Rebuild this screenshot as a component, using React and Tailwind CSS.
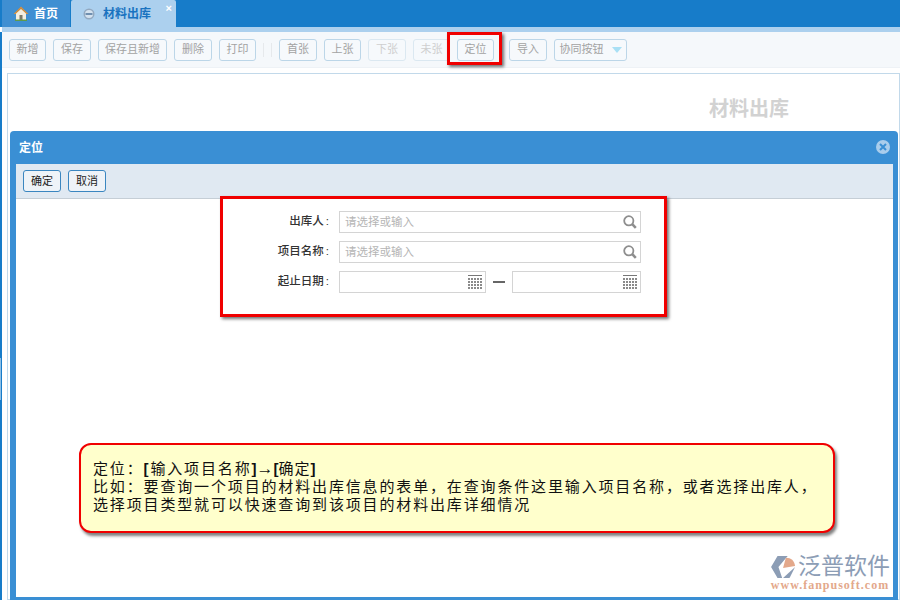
const cjk = { fontFamily: '"Liberation Sans", "Noto Sans CJK SC", sans-serif' }

function ToolButton({ label, width, tone = 'normal', caret }) {
  const tones = {
    normal: 'border-[#bcd6e8] text-[#a3a3a3]',
    faded: 'border-[#dbe8f1] text-[#cfcfcf]',
  }
  return (
    <button
      className={`flex h-[22px] shrink-0 items-center justify-center gap-2 rounded-[3px] border bg-[#f6f9fc] text-[11px] ${tones[tone]}`}
      style={{ width }}
    >
      {label}
      {caret && <span className="h-0 w-0 border-x-[5px] border-t-[6px] border-x-transparent border-t-[#a9e0f5]" />}
    </button>
  )
}

function DialogButton({ label }) {
  return (
    <button className="flex h-[22px] w-[38px] items-center justify-center rounded-[3px] border border-[#3a86c0] bg-[#eef3f8] text-[11px] text-[#222]">
      {label}
    </button>
  )
}

function SearchIcon() {
  return (
    <svg width="14" height="14" viewBox="0 0 14 14" className="shrink-0">
      <circle cx="5.8" cy="5.8" r="4.6" fill="none" stroke="#8e8e8e" strokeWidth="1.8" />
      <path d="M9.2 9.2 L12.8 12.8" stroke="#8e8e8e" strokeWidth="2.6" />
    </svg>
  )
}

function CalendarIcon() {
  const cells = []
  for (let r = 0; r < 4; r++) {
    for (let c = 0; c < 5; c++) {
      cells.push(<rect key={`${r}-${c}`} x={c * 3} y={3 + r * 3} width="2" height="2" fill="#8a8a8a" />)
    }
  }
  return (
    <svg width="14" height="15" viewBox="0 0 14 15" className="shrink-0">
      <rect x="0" y="0" width="14" height="1" fill="#777" />
      {cells}
    </svg>
  )
}

function Field({ width, placeholder, icon }) {
  return (
    <div
      className="flex h-[22px] items-center justify-between border border-[#d4d4d4] bg-white pr-[3px] pl-[5px] text-[11.5px] text-[#b5b5b5]"
      style={{ width }}
    >
      <span className="pt-[1px]">{placeholder}</span>
      {icon}
    </div>
  )
}

function FormRow({ label, children }) {
  return (
    <div className="flex h-[22px] items-center">
      <div className="w-[105px] pr-[1px] text-right text-[11.5px] font-medium text-[#333]">
        {label}
        <span className="ml-[2px]">:</span>
      </div>
      <div className="ml-[9px] flex items-center">{children}</div>
    </div>
  )
}

function Logo() {
  return (
    <div className="absolute right-[2px] bottom-[6px] flex w-[122px] flex-col items-center">
      <div className="flex items-center">
        <svg width="28" height="24" viewBox="0 0 28 26" className="shrink-0">
          <path d="M7 1 H18 L8 13 L12 25 H7 L0 13 Z" fill="#8c9db5" />
          <path d="M16 3 C22 3 25 6 26 12 L13 14 Z" fill="#e3a88b" />
          <path d="M26 13 L20 25 H13 Z" fill="#8c9db5" />
        </svg>
        <span className="text-[23px] leading-[25px] font-normal text-[#8c9db5]">泛普软件</span>
      </div>
      <div
        className="text-[12px] leading-[12px] font-bold tracking-[1px] whitespace-nowrap text-[#e3a88b]"
        style={{ fontFamily: '"Liberation Serif", serif' }}
      >
        www.fanpusoft.com
      </div>
    </div>
  )
}

export default function App() {
  return (
    <div className="relative flex h-[600px] w-[900px] flex-col overflow-hidden bg-white" style={cjk}>
      {/* tabs */}
      <div className="flex h-[27px] shrink-0 items-start bg-[#177cc9] pl-[2px]">
        <div className="flex h-[27px] w-[68px] items-center gap-[5px] bg-[#3f8fd2] pl-[11px] text-[12px] font-bold text-white">
          <svg width="16" height="15" viewBox="0 0 16 15" className="shrink-0">
            <path d="M8 1 L15 8 H13 V14 H3 V8 H1 Z" fill="#f4eee0" />
            <path d="M8 0.5 L15.5 8 L13.5 8 L8 3 L2.5 8 L0.5 8 Z" fill="#c98a3e" />
            <rect x="6.5" y="9" width="3" height="5" fill="#7a7a6a" />
            <rect x="2" y="13.5" width="12" height="1.5" fill="#5f9a4a" />
          </svg>
          首页
        </div>
        <div className="relative ml-px flex h-[32px] w-[105px] items-center gap-[8px] rounded-t-[2px] bg-[#acd0ee] pb-[5px] pl-[12px] text-[12px] font-bold text-[#1a73c0]">
          <svg width="12" height="12" viewBox="0 0 12 12" className="shrink-0">
            <circle cx="6" cy="6" r="5.5" fill="#93a9c0" />
            <circle cx="6" cy="6" r="4" fill="#d4e2ef" />
            <rect x="2.5" y="5" width="7" height="2" fill="#6f8fb0" />
          </svg>
          材料出库
          <span className="absolute top-[3px] right-[4px] text-[11px] leading-[11px] font-bold text-white">×</span>
        </div>
      </div>
      <div className="ml-[2px] h-[5px] shrink-0 bg-[#acd0ee]" />

      <div className="ml-[2px] flex min-h-0 flex-1 flex-col bg-white">
        {/* toolbar */}
        <div className="flex h-[36px] shrink-0 items-center gap-[7px] border-b border-[#eef2f6] bg-[#f5f8fb] pl-[7px]">
          <ToolButton label="新增" width={37} />
          <ToolButton label="保存" width={38} />
          <ToolButton label="保存且新增" width={69} />
          <ToolButton label="删除" width={38} />
          <ToolButton label="打印" width={37} />
          <div className="h-[14px] w-px bg-[#e6e9ec]" />
          <div className="h-[14px] w-px bg-[#e6e9ec]" />
          <ToolButton label="首张" width={38} />
          <ToolButton label="上张" width={37} />
          <ToolButton label="下张" width={38} tone="faded" />
          <ToolButton label="未张" width={37} tone="faded" />
          <ToolButton label="定位" width={37} />
          <div className="w-px" />
          <ToolButton label="导入" width={38} />
          <ToolButton label="协同按钮" width={73} caret />
        </div>
        {/* form behind the dialog */}
        <div className="mt-[5px] ml-[5px] flex-1 border border-[#c2d9ea] bg-white">
          <div className="mt-[23px] ml-[701px] text-[20px] leading-[24px] font-bold text-[#d2d2d2]">材料出库</div>
        </div>
      </div>

      {/* highlight on the locate button */}
      <div className="absolute top-[32px] left-[447px] h-[33px] w-[55px] border-[3px] border-[#f00000] shadow-[2px_2px_3px_rgba(0,0,0,0.55)]" />

      {/* dialog */}
      <div className="absolute top-[131px] left-[10px] flex h-[469px] w-[888px] flex-col rounded-t-[4px] bg-[#3a8fd4] pr-[5px] pb-[3px] pl-[6px]">
        <div className="flex h-[33px] shrink-0 items-center justify-between text-[12px] font-bold text-white">
          <span className="ml-[3px]">定位</span>
          <svg width="14" height="14" viewBox="0 0 14 14" className="mt-[-1px] mr-[3px]">
            <circle cx="7" cy="7" r="7" fill="#a9cdec" />
            <path d="M4 4 L10 10 M10 4 L4 10" stroke="#3a8fd4" strokeWidth="2" />
          </svg>
        </div>
        <div className="relative flex min-h-0 flex-1 flex-col bg-white">
          <div className="flex h-[35px] shrink-0 items-center gap-[7px] border-b border-[#c5ced6] bg-[#e0e9f2] pl-[7px]">
            <DialogButton label="确定" />
            <DialogButton label="取消" />
          </div>
          <div className="mt-[-3px] ml-[204px] flex h-[121px] w-[447px] flex-col gap-[8px] border-[3px] border-[#f00000] pt-[12px] pl-[2px] shadow-[2px_2px_3px_rgba(0,0,0,0.55)]">
            <FormRow label="出库人">
              <Field width={302} placeholder="请选择或输入" icon={<SearchIcon />} />
            </FormRow>
            <FormRow label="项目名称">
              <Field width={302} placeholder="请选择或输入" icon={<SearchIcon />} />
            </FormRow>
            <FormRow label="起止日期">
              <Field width={147} icon={<CalendarIcon />} />
              <div className="mx-[7px] h-[2px] w-[12px] bg-[#666]" />
              <Field width={129} icon={<CalendarIcon />} />
            </FormRow>
          </div>

          {/* callout */}
          <div className="absolute top-[279px] left-[63px] h-[90px] w-[756px] rounded-[12px] border-2 border-[#f00000] bg-[#ffffcc] pt-[15px] pl-[12px] text-[15px] leading-[18px] tracking-[1.85px] whitespace-nowrap text-[#111] shadow-[2px_3px_3px_rgba(0,0,0,0.5)]">
            <div>
              定位：<b>[</b>输入项目名称<b className="tracking-normal">]</b>
              <span className="text-[17px] leading-none tracking-normal">→</span>
              <b className="tracking-normal">[</b>
              <span className="tracking-[1px]">确定</span>
              <b className="tracking-normal">]</b>
            </div>
            <div>比如：要查询一个项目的材料出库信息的表单，在查询条件这里输入项目名称，或者选择出库人，</div>
            <div>选择项目类型就可以快速查询到该项目的材料出库详细情况</div>
          </div>

          <Logo />
        </div>
      </div>

      {/* left edge of the page */}
      <div className="absolute top-[32px] bottom-0 left-0 w-[2px] bg-[#177cc9]" />
      <div className="absolute top-[358px] left-0 h-[42px] w-px bg-[#8dbfe6]" />
    </div>
  )
}
